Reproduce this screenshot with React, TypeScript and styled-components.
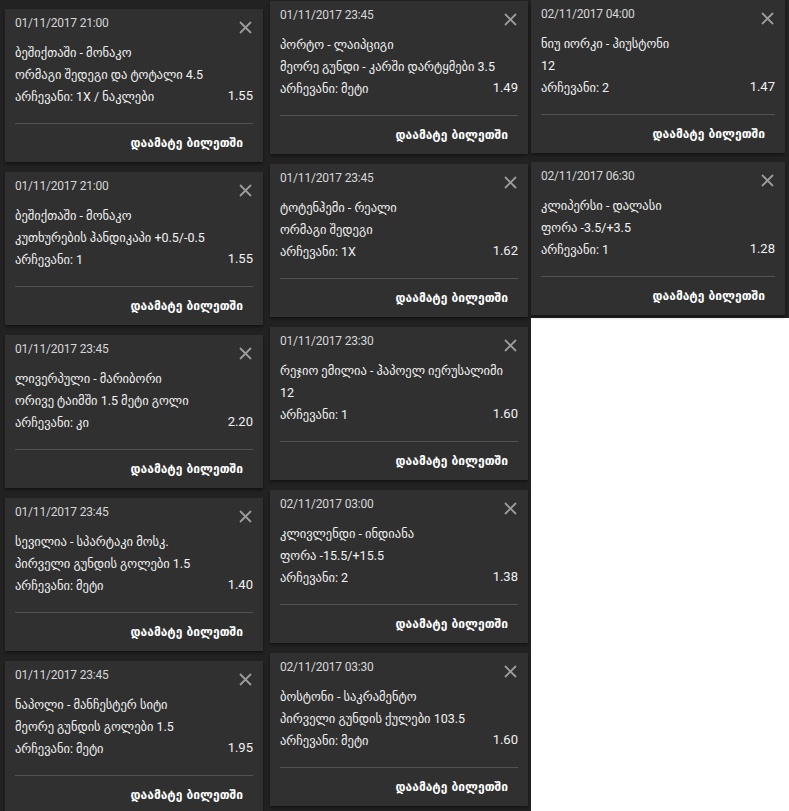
import styled, { createGlobalStyle } from "styled-components";

const GlobalStyle = createGlobalStyle`
  html, body {
    margin: 0;
    padding: 0;
    background: #ffffff;
  }
  body {
    font-family: Roboto, "DejaVu Sans", sans-serif;
  }
`;

type Bet = {
  date: string;
  teams: string;
  market: string;
  choice: string;
  odds: string;
};

const columns: { pad: string; gap: number; bets: Bet[] }[] = [
  {
    pad: "9px 4px 0 5px",
    gap: 10,
    bets: [
      {
        date: "01/11/2017 21:00",
        teams: "ბეშიქთაში - მონაკო",
        market: "ორმაგი შედეგი და ტოტალი 4.5",
        choice: "არჩევანი: 1X / ნაკლები",
        odds: "1.55",
      },
      {
        date: "01/11/2017 21:00",
        teams: "ბეშიქთაში - მონაკო",
        market: "კუთხურების ჰანდიკაპი +0.5/-0.5",
        choice: "არჩევანი: 1",
        odds: "1.55",
      },
      {
        date: "01/11/2017 23:45",
        teams: "ლივერპული - მარიბორი",
        market: "ორივე ტაიმში 1.5 მეტი გოლი",
        choice: "არჩევანი: კი",
        odds: "2.20",
      },
      {
        date: "01/11/2017 23:45",
        teams: "სევილია - სპარტაკი მოსკ.",
        market: "პირველი გუნდის გოლები 1.5",
        choice: "არჩევანი: მეტი",
        odds: "1.40",
      },
      {
        date: "01/11/2017 23:45",
        teams: "ნაპოლი - მანჩესტერ სიტი",
        market: "მეორე გუნდის გოლები 1.5",
        choice: "არჩევანი: მეტი",
        odds: "1.95",
      },
    ],
  },
  {
    pad: "1px 3px 5px 3px",
    gap: 10,
    bets: [
      {
        date: "01/11/2017 23:45",
        teams: "პორტო - ლაიპციგი",
        market: "მეორე გუნდი - კარში დარტყმები 3.5",
        choice: "არჩევანი: მეტი",
        odds: "1.49",
      },
      {
        date: "01/11/2017 23:45",
        teams: "ტოტენჰემი - რეალი",
        market: "ორმაგი შედეგი",
        choice: "არჩევანი: 1X",
        odds: "1.62",
      },
      {
        date: "01/11/2017 23:30",
        teams: "რეჯიო ემილია - ჰაპოელ იერუსალიმი",
        market: "12",
        choice: "არჩევანი: 1",
        odds: "1.60",
      },
      {
        date: "02/11/2017 03:00",
        teams: "კლივლენდი - ინდიანა",
        market: "ფორა -15.5/+15.5",
        choice: "არჩევანი: 2",
        odds: "1.38",
      },
      {
        date: "02/11/2017 03:30",
        teams: "ბოსტონი - საკრამენტო",
        market: "პირველი გუნდის ქულები 103.5",
        choice: "არჩევანი: მეტი",
        odds: "1.60",
      },
    ],
  },
  {
    pad: "0 4px 3px 0",
    gap: 9,
    bets: [
      {
        date: "02/11/2017 04:00",
        teams: "ნიუ იორკი - ჰიუსტონი",
        market: "12",
        choice: "არჩევანი: 2",
        odds: "1.47",
      },
      {
        date: "02/11/2017 06:30",
        teams: "კლიპერსი - დალასი",
        market: "ფორა -3.5/+3.5",
        choice: "არჩევანი: 1",
        odds: "1.28",
      },
    ],
  },
];

const Board = styled.div`
  display: grid;
  grid-template-columns: 267px 264px 258px;
  align-items: start;
  width: 789px;
`;

const Column = styled.div<{ $pad: string; $gap: number }>`
  display: flex;
  flex-direction: column;
  gap: ${(p) => p.$gap}px;
  padding: ${(p) => p.$pad};
  background-color: #222222;
`;

const Card = styled.div`
  display: flex;
  flex-direction: column;
  background-color: #303030;
  box-shadow: 0 2px 3px rgba(0, 0, 0, 0.45);
  padding: 5px 10px 0 10px;
  color: #f2f2f2;
  font-size: 12.5px;
`;

const Head = styled.div`
  display: flex;
  justify-content: space-between;
  align-items: flex-start;
  height: 28px;
`;

const Date = styled.span`
  line-height: 19px;
  font-size: 12px;
  color: #d6d6d6;
  letter-spacing: -0.2px;
`;

const Close = styled.button`
  all: unset;
  display: flex;
  margin-top: 7px;
  margin-right: 1px;
  cursor: pointer;
`;

const Line = styled.div`
  height: 22px;
  line-height: 22px;
  white-space: nowrap;
  overflow: hidden;
`;

const ChoiceRow = styled.div`
  display: flex;
  justify-content: space-between;
  align-items: flex-start;
  height: 22px;
  line-height: 22px;
`;

const Odds = styled.span`
  font-size: 13px;
  line-height: 20px;
`;

const Divider = styled.div`
  height: 1px;
  background-color: #525252;
  margin-top: 15px;
`;

const AddButton = styled.button`
  all: unset;
  display: flex;
  justify-content: flex-end;
  align-items: center;
  height: 38px;
  padding-right: 10px;
  font-family: "DejaVu Sans", sans-serif;
  font-weight: 700;
  font-size: 12px;
  color: #ffffff;
  cursor: pointer;
`;

function CloseIcon() {
  return (
    <svg width="13" height="13" viewBox="0 0 13 13">
      <path
        d="M1 1 L12 12 M12 1 L1 12"
        stroke="#9c9c9c"
        strokeWidth="1.8"
        fill="none"
      />
    </svg>
  );
}

function BetCard({ bet }: { bet: Bet }) {
  return (
    <Card>
      <Head>
        <Date>{bet.date}</Date>
        <Close>
          <CloseIcon />
        </Close>
      </Head>
      <Line>{bet.teams}</Line>
      <Line>{bet.market}</Line>
      <ChoiceRow>
        <span>{bet.choice}</span>
        <Odds>{bet.odds}</Odds>
      </ChoiceRow>
      <Divider />
      <AddButton>დაამატე ბილეთში</AddButton>
    </Card>
  );
}

export default function App() {
  return (
    <>
      <GlobalStyle />
      <Board>
        {columns.map((col, i) => (
          <Column key={i} $pad={col.pad} $gap={col.gap}>
            {col.bets.map((bet, j) => (
              <BetCard key={j} bet={bet} />
            ))}
          </Column>
        ))}
      </Board>
    </>
  );
}
